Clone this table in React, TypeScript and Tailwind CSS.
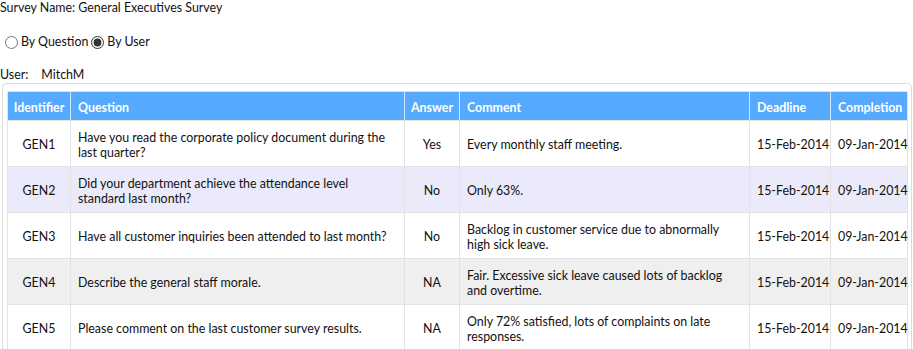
import React from "react";

const rows = [
  { id: "GEN1", q: "Have you read the corporate policy document during the last quarter?", a: "Yes", c: "Every monthly staff meeting.", bg: "bg-white" },
  { id: "GEN2", q: "Did your department achieve the attendance level standard last month?", a: "No", c: "Only 63%.", bg: "bg-[#eaeafa]" },
  { id: "GEN3", q: "Have all customer inquiries been attended to last month?", a: "No", c: "Backlog in customer service due to abnormally high sick leave.", bg: "bg-white" },
  { id: "GEN4", q: "Describe the general staff morale.", a: "NA", c: "Fair. Excessive sick leave caused lots of backlog and overtime.", bg: "bg-[#efefef]" },
  { id: "GEN5", q: "Please comment on the last customer survey results.", a: "NA", c: "Only 72% satisfied, lots of complaints on late responses.", bg: "bg-white" },
];

export default function App() {
  return (
    <div className="w-[913px] h-[349px] overflow-hidden bg-white text-[12.4px] text-[#111] font-['Lato','Liberation_Sans',sans-serif]">
      <p className="leading-[15px]">Survey Name: General Executives Survey</p>
      <div className="mt-[19px] h-[16px] flex items-center">
        <input type="radio" name="mode" className="ml-[5px] mr-[3px] w-[13px] h-[13px] accent-[#333]" />
        <span>By Question</span>
        <input type="radio" name="mode" defaultChecked className="ml-[3px] mr-[3px] w-[13px] h-[13px] accent-[#333]" />
        <span>By User</span>
      </div>
      <p className="mt-[17px] leading-[15px]">
        User:<span className="ml-[13px]">MitchM</span>
      </p>
      <div className="mt-[1px] ml-[2px] w-[910px] border border-[#dcdcdc] rounded-[4px] pt-[7px] px-[4px] h-[300px]">
        <table className="table-fixed border-collapse w-[900px] border border-[#e3e3e3]">
          <colgroup>
            <col className="w-[63px]" />
            <col className="w-[334px]" />
            <col className="w-[55px]" />
            <col className="w-[290px]" />
            <col className="w-[81px]" />
            <col className="w-[77px]" />
          </colgroup>
          <thead>
            <tr className="bg-[#55aaff] text-white font-bold h-[29px] leading-[15px]">
              <th className="text-center px-[4px] pt-[3px] border-r border-[#cfe6ff] font-bold">Identifier</th>
              <th className="text-left px-[7px] pt-[3px] border-r border-[#cfe6ff] font-bold">Question</th>
              <th className="text-center px-[2px] pt-[3px] border-r border-[#cfe6ff] font-bold">Answer</th>
              <th className="text-left px-[7px] pt-[3px] border-r border-[#cfe6ff] font-bold">Comment</th>
              <th className="text-left px-[7px] pt-[3px] border-r border-[#cfe6ff] font-bold">Deadline</th>
              <th className="text-left px-[7px] pt-[3px] font-bold">Completion</th>
            </tr>
          </thead>
          <tbody>
            {rows.map((r) => (
              <tr key={r.id} className={`${r.bg} h-[46px] border-t border-[#e3e3e3] leading-[15px]`}>
                <td className="text-center px-[4px] pt-[2px] border-r border-[#e3e3e3]">{r.id}</td>
                <td className="text-left px-[7px] pt-[2px] border-r border-[#e3e3e3]">{r.q}</td>
                <td className="text-center px-[2px] pt-[2px] border-r border-[#e3e3e3]">{r.a}</td>
                <td className="text-left px-[7px] pt-[2px] border-r border-[#e3e3e3]">{r.c}</td>
                <td className="text-left px-[7px] pt-[2px] border-r border-[#e3e3e3] whitespace-nowrap">15-Feb-2014</td>
                <td className="text-left px-[7px] pt-[2px] whitespace-nowrap">09-Jan-2014</td>
              </tr>
            ))}
          </tbody>
        </table>
      </div>
    </div>
  );
}
